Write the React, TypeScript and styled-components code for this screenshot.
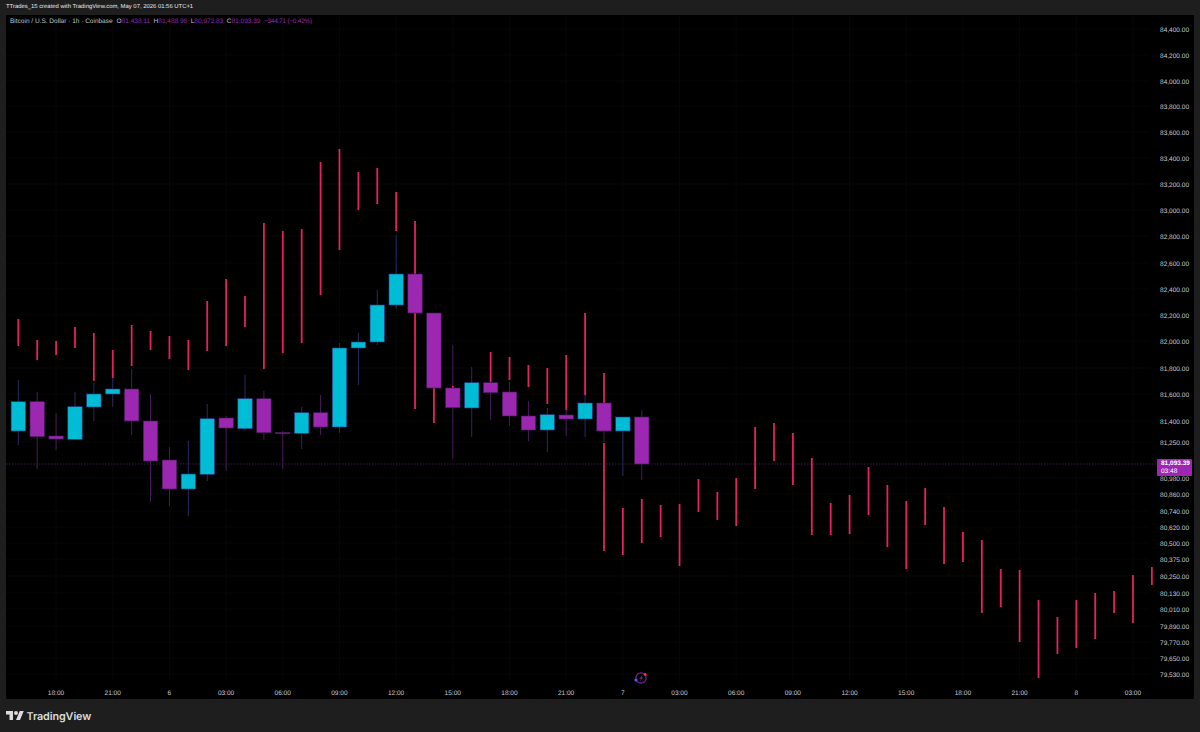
import styled, { createGlobalStyle } from "styled-components";

type Candle = [number, number, number, number, "up" | "down"];

const GlobalStyle = createGlobalStyle`
  html, body {
    margin: 0;
    height: 100%;
    background: #1e1e1e;
  }
  #root {
    height: 100%;
  }
`;

const Page = styled.div`
  width: 1200px;
  height: 732px;
  display: flex;
  flex-direction: column;
  background: #1e1e1e;
  font-family: "Liberation Sans", sans-serif;
  text-rendering: geometricPrecision;
  overflow: hidden;
`;

const Header = styled.div`
  height: 15px;
  padding-left: 6px;
  font-size: 5.9px;
  line-height: 15px;
  color: #e8e8e8;
  white-space: nowrap;
`;

const ChartPanel = styled.div`
  position: relative;
  height: 684px;
  margin: 0 6px;
  background: #000;
`;

const Plot = styled.svg`
  display: block;
  font-family: "Liberation Sans", sans-serif;
`;

const Legend = styled.div`
  position: absolute;
  left: 4px;
  top: 2px;
  display: flex;
  gap: 3.5px;
  font-size: 6.5px;
  line-height: 10px;
  color: #c0c2c8;
  white-space: nowrap;
`;

const LegendTitle = styled.span`
  margin-right: 0.5px;
`;

const Ohlc = styled.span`
  color: #9c27b0;

  b {
    font-weight: 400;
    color: #c0c2c8;
  }
`;

const Delta = styled(Ohlc)`
  letter-spacing: -0.25px;
`;

const PriceTag = styled.div`
  position: absolute;
  left: 1151px;
  top: 444px;
  width: 35px;
  height: 17px;
  padding: 0.5px 0 0 4px;
  box-sizing: border-box;
  border-radius: 1px;
  background: #9c27b0;
  color: #fff;
  font-size: 6.5px;
  line-height: 8px;
`;

const TagPrice = styled.div`
  font-weight: 700;
`;

const Footer = styled.div`
  flex: 1;
  display: flex;
  align-items: center;
  gap: 2.5px;
  padding: 1px 0 0 6px;
`;

const Wordmark = styled.span`
  font-family: "Inter", "Liberation Sans", sans-serif;
  font-size: 10.8px;
  font-weight: 600;
  letter-spacing: -0.1px;
  color: #dcdcdc;
`;

const xAt = (i: number) => 18.3 + 18.893 * i;

const candles: Candle[] = [
  [380, 445, 401.7, 431, "up"],
  [392, 469, 401.7, 436.7, "down"],
  [413, 450, 436, 439, "down"],
  [392, 440, 406.7, 439.3, "up"],
  [383, 421, 394, 407, "up"],
  [370, 407, 389, 394, "up"],
  [369, 435, 389, 421, "down"],
  [394, 502, 421, 461, "down"],
  [447, 506, 460, 489, "down"],
  [441, 516, 474, 489, "up"],
  [404, 481, 418.7, 474.3, "up"],
  [416, 471, 418, 428, "down"],
  [375, 430, 398.7, 428.7, "up"],
  [391, 440, 398.7, 432.7, "down"],
  [431, 469, 432.5, 433.7, "down"],
  [407, 449, 412.7, 433.3, "up"],
  [395, 435, 412.7, 427, "down"],
  [343, 433, 348, 427, "up"],
  [333, 385, 342, 348, "up"],
  [290, 345, 305, 342, "up"],
  [235, 309, 274, 305, "up"],
  [274, 313, 274, 313, "down"],
  [313, 388, 313, 388, "down"],
  [345, 459, 388, 407.7, "down"],
  [367, 437, 382.7, 408, "up"],
  [352, 420, 382.7, 392.7, "down"],
  [382, 426, 392, 416, "down"],
  [401, 441, 416, 430, "down"],
  [408, 452, 414.7, 430, "up"],
  [410, 436, 415, 419, "down"],
  [393, 437, 403, 419, "up"],
  [403, 442, 403, 431, "down"],
  [417, 476, 417, 431, "up"],
  [410, 480, 417, 464, "down"],
];

// [candle index, top, bottom] of the floating red series
const redWicks: [number, number, number][] = [
  [0, 319, 346], [1, 340, 360], [2, 341, 355], [3, 327, 348], [4, 333, 381],
  [5, 350, 378], [6, 325, 366], [7, 331, 350], [8, 336, 359], [9, 340, 370],
  [10, 301, 351], [11, 279, 346], [12, 296, 327], [13, 223, 369], [14, 231, 353],
  [15, 229, 343], [16, 162, 295], [17, 149, 250], [18, 172, 210], [19, 168, 204],
  [20, 192, 231], [21, 221, 274], [21, 313, 409], [22, 388, 423], [23, 386, 388],
  [25, 352, 382], [26, 357, 380], [27, 365, 387], [28, 368, 404], [29, 355, 410],
  [30, 313, 395], [31, 373, 403], [31, 443, 551], [32, 508, 555], [33, 499, 543],
  [34, 505, 537], [35, 504, 566], [36, 479, 512], [37, 492, 520], [38, 478, 526],
  [39, 427, 489], [40, 423, 461], [41, 433, 485], [42, 458, 535], [43, 503, 535],
  [44, 495, 534], [45, 467, 515], [46, 485, 547], [47, 501, 569], [48, 488, 525],
  [49, 507, 564], [50, 532, 562], [51, 540, 613], [52, 569, 607], [53, 570, 642],
  [54, 600, 678], [55, 617, 654], [56, 600, 648], [57, 593, 639], [58, 591, 613],
  [59, 575, 623], [60, 567, 585],
];

const prices: [string, number][] = [
  ["84,400.00", 29], ["84,200.00", 55], ["84,000.00", 81], ["83,800.00", 106],
  ["83,600.00", 132], ["83,400.00", 158], ["83,200.00", 184], ["83,000.00", 210],
  ["82,800.00", 236], ["82,600.00", 263], ["82,400.00", 289], ["82,200.00", 315],
  ["82,000.00", 341], ["81,800.00", 368], ["81,600.00", 394], ["81,400.00", 421],
  ["81,250.00", 442], ["80,980.00", 478], ["80,860.00", 494], ["80,740.00", 511],
  ["80,620.00", 527], ["80,500.00", 543], ["80,375.00", 559], ["80,250.00", 576],
  ["80,130.00", 593], ["80,010.00", 609], ["79,890.00", 626], ["79,770.00", 642],
  ["79,650.00", 658], ["79,530.00", 674],
];

const times = [
  "18:00", "21:00", "6", "03:00", "06:00", "09:00", "12:00", "15:00", "18:00", "21:00",
  "7", "03:00", "06:00", "09:00", "12:00", "15:00", "18:00", "21:00", "8", "03:00",
];
const timeX = (i: number) => 56 + 56.68 * i;

const colors = {
  up: { body: "#00bcd4", edge: "#1f3f8f", wick: "#2b2a66" },
  down: { body: "#9c27b0", edge: "#4a1a5e", wick: "#4a1a5e" },
};

function Chart() {
  return (
    <Plot width={1188} height={684} viewBox="6 15 1188 684">
      {prices.map(([label, y]) => (
        <line key={label} x1={6} x2={1150} y1={y} y2={y} stroke="#070707" />
      ))}
      {times.map((label, i) => (
        <line key={i} x1={timeX(i)} x2={timeX(i)} y1={15} y2={682} stroke="#070707" />
      ))}
      <line x1={6} x2={1157} y1={464} y2={464} stroke="#3a1a44" strokeDasharray="1.5 1.5" />

      {candles.map(([top, bottom, , , dir], i) => (
        <line
          key={i}
          x1={xAt(i)}
          x2={xAt(i)}
          y1={top}
          y2={bottom}
          stroke={colors[dir].wick}
          strokeWidth={1}
        />
      ))}
      {redWicks.map(([i, top, bottom]) => (
        <line
          key={`${i}-${top}`}
          x1={xAt(i)}
          x2={xAt(i)}
          y1={top}
          y2={bottom}
          stroke="#e91e63"
          strokeWidth={1.8}
        />
      ))}
      {candles.map(([, , open, close, dir], i) => (
        <rect
          key={i}
          x={xAt(i) - 7.2}
          y={open}
          width={14.4}
          height={close - open}
          fill={colors[dir].body}
          stroke={colors[dir].edge}
          strokeWidth={0.6}
        />
      ))}

      {prices.map(([label, y]) => (
        <text key={label} x={1189} y={y + 3} textAnchor="end" fontSize={6.5} fill="#c8cad0">
          {label}
        </text>
      ))}
      {times.map((label, i) => (
        <text key={i} x={timeX(i)} y={694.6} textAnchor="middle" fontSize={6.5} fill="#c8cad0">
          {label}
        </text>
      ))}

      <circle cx={641} cy={678} r={5.2} fill="none" stroke="#7b1fa2" strokeWidth={1.2} />
      <path d="M642.5 674.8 L639.4 678.6 H641.2 L639.8 681.2 L643 677.4 H641.2 Z" fill="#8e24aa" />
      <circle cx={645.2} cy={674.6} r={1.5} fill="#f23645" />
      <circle cx={636} cy={680} r={1.6} fill="#5b5bf0" />
    </Plot>
  );
}

export default function App() {
  return (
    <Page>
      <GlobalStyle />
      <Header>TTrades_15 created with TradingView.com, May 07, 2026 01:56 UTC+1</Header>
      <ChartPanel>
        <Chart />
        <Legend>
          <LegendTitle>Bitcoin / U.S. Dollar · 1h · Coinbase</LegendTitle>
          <Ohlc><b>O</b>81,438.11</Ohlc>
          <Ohlc><b>H</b>81,488.98</Ohlc>
          <Ohlc><b>L</b>80,972.83</Ohlc>
          <Ohlc><b>C</b>81,093.39</Ohlc>
          <Delta>−344.71 (−0.42%)</Delta>
        </Legend>
        <PriceTag>
          <TagPrice>81,093.39</TagPrice>
          <div>03:48</div>
        </PriceTag>
      </ChartPanel>
      <Footer>
        <svg width="18" height="14" viewBox="0 0 36 28" fill="#dcdcdc">
          <path d="M14 22H7V11H0V4h14v18zM28 22h-8l7.5-18h8L28 22z" />
          <circle cx="20" cy="8" r="4" />
        </svg>
        <Wordmark>TradingView</Wordmark>
      </Footer>
    </Page>
  );
}
